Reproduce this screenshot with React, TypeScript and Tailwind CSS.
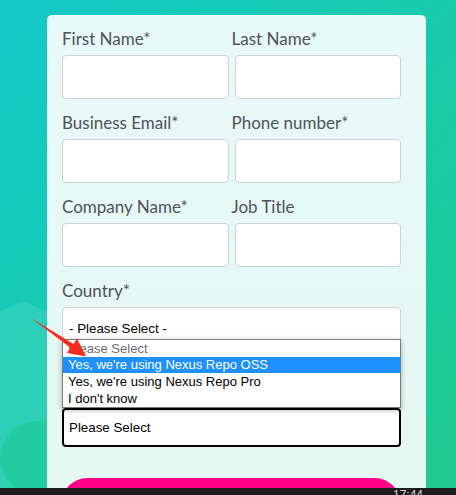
import React from "react";

const labelCls =
  "block text-[17px] leading-[20px] text-[#4d535b] mb-[6px] whitespace-nowrap";
const inputCls =
  "block w-full h-[44px] bg-white border border-[#cfd2d4] rounded-[4px]";

function Field({ label, shift }: { label: string; shift?: boolean }) {
  return (
    <div className="flex-1 min-w-0">
      <span className={shift ? labelCls + " -ml-[3px]" : labelCls}>{label}</span>
      <div className={inputCls} />
    </div>
  );
}

export default function App() {
  return (
    <div
      className="relative w-[456px] h-[495px] overflow-hidden bg-gradient-to-br from-[#14c9c8] to-[#1fcb8e]"
      style={{ fontFamily: "Lato, 'Open Sans', sans-serif" }}
    >
      {/* background decorative shapes */}
      <svg
        className="absolute left-0 top-0"
        width="456"
        height="495"
        viewBox="0 0 456 495"
      >
        <polygon points="-40,330 23,301 90,330 90,495 -40,495" fill="#ffffff" fillOpacity="0.1" />
        <circle cx="37" cy="458" r="37" fill="#1fcb9a" fillOpacity="0.75" />
      </svg>

      <div className="relative pt-[15px] pl-[47px]">
        <div className="w-[379px] h-[500px] rounded-[5px] bg-gradient-to-b from-[#e8f9f9] to-[#e5f8f1] pt-[14px] pl-[15px] pr-[25px]">
          <div className="flex gap-[6px]">
            <Field label="First Name*" />
            <Field label="Last Name*" shift />
          </div>
          <div className="flex gap-[6px] mt-[14px]">
            <Field label="Business Email*" />
            <Field label="Phone number*" shift />
          </div>
          <div className="flex gap-[6px] mt-[14px]">
            <Field label="Company Name*" />
            <Field label="Job Title" shift />
          </div>
          <div className="mt-[14px]">
            <span className={labelCls}>Country*</span>
            <div
              className="h-[44px] bg-white border border-[#cfd2d4] rounded-[4px] flex items-center pl-[6px] text-[13.33px] text-black"
              style={{ fontFamily: "'Liberation Sans', Arial, sans-serif" }}
            >
              - Please Select -
            </div>
          </div>
          <div className="relative mt-[57px]">
            <div
              className="h-[39px] bg-white border-2 border-black rounded-[4px] flex items-center pl-[5px] text-[13.33px] text-black"
              style={{ fontFamily: "'Liberation Sans', Arial, sans-serif" }}
            >
              Please Select
            </div>
            {/* open dropdown list */}
            <div
              className="absolute left-0 right-0 top-[-69px] bg-white border border-[#7a7a7a] shadow-[0_2px_6px_rgba(0,0,0,0.3)] text-[13px] leading-[17px]"
              style={{ fontFamily: "'Liberation Sans', Arial, sans-serif" }}
            >
              <div className="h-[17px] pl-[5px] text-[#6d6d6d]">Please Select</div>
              <div className="h-[16px] pl-[5px] bg-[#1e90ff] text-white leading-[16px]">
                Yes, we're using Nexus Repo OSS
              </div>
              <div className="h-[17px] pl-[5px] text-black">Yes, we're using Nexus Repo Pro</div>
              <div className="h-[17px] pl-[5px] text-black">I don't know</div>
            </div>
          </div>
          <div className="mt-[31px] h-[50px] rounded-full bg-[#ff0087] mr-[1px]" />
        </div>
      </div>

      {/* annotation arrow */}
      <svg
        className="absolute left-0 top-0 pointer-events-none"
        width="456"
        height="495"
        viewBox="0 0 456 495"
      >
        <polygon
          points="31,318 73.5,344 77,338.5 86,356.5 67,353 70.5,347.8"
          fill="#fa2a1e"
        />
      </svg>

      {/* taskbar strip */}
      <div className="absolute left-0 right-0 bottom-0 h-[7px] bg-[#1c1c1c] overflow-hidden">
        <span
          className="absolute left-[393px] top-[1px] text-[12px] leading-[12px] text-[#d8d8d8]"
          style={{ fontFamily: "'Liberation Sans', Arial, sans-serif" }}
        >
          17:44
        </span>
      </div>
    </div>
  );
}
